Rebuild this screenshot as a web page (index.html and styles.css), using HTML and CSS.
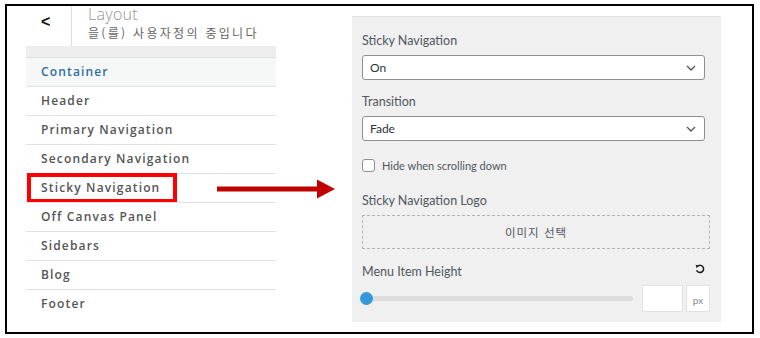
FILE: index.html
```html
<!DOCTYPE html>
<html lang="ko">
<head>
<meta charset="utf-8">
<link rel="stylesheet" href="styles.css">
</head>
<body>
<div class="frame">
  <div class="sidebar">
    <div class="sb-head">
      <div class="back">&lt;</div>
      <div class="title">
        <div class="t-main">Layout</div>
        <div class="t-sub">을(를) 사용자정의 중입니다</div>
      </div>
    </div>
    <div class="strip"></div>
    <ul class="menu">
      <li class="active">Container</li>
      <li>Header</li>
      <li>Primary Navigation</li>
      <li>Secondary Navigation</li>
      <li class="hl">Sticky Navigation<span class="mark"></span></li>
      <li>Off Canvas Panel</li>
      <li>Sidebars</li>
      <li>Blog</li>
      <li>Footer</li>
    </ul>
  </div>
  <div class="panel">
    <div class="lbl l1">Sticky Navigation</div>
    <div class="sel">On<svg class="chev" width="10" height="6" viewBox="0 0 10 6"><path d="M1 1l4 4 4-4" fill="none" stroke="#555" stroke-width="1.3"/></svg></div>
    <div class="lbl l2">Transition</div>
    <div class="sel">Fade<svg class="chev" width="10" height="6" viewBox="0 0 10 6"><path d="M1 1l4 4 4-4" fill="none" stroke="#555" stroke-width="1.3"/></svg></div>
    <div class="chk"><span class="box"></span>Hide when scrolling down</div>
    <div class="lbl l3">Sticky Navigation Logo</div>
    <div class="drop">이미지 선택</div>
    <div class="lbl-row"><span class="lbl">Menu Item Height</span>
      <svg class="reset" width="10" height="10" viewBox="0 0 10 10"><path d="M2.2 2.6A3.6 3.6 0 1 1 1.6 6.2" fill="none" stroke="#222" stroke-width="1.6"/><path d="M0.6 0.8L4.2 1.4 1.6 4.2z" fill="#222"/></svg>
    </div>
    <div class="slider-row">
      <div class="track"><span class="thumb"></span></div>
      <div class="num"></div>
      <div class="unit">px</div>
    </div>
  </div>
  <svg class="arrow" width="120" height="22" viewBox="0 0 120 22"><rect x="0" y="8.5" width="102" height="5" fill="#c00000"/><path d="M100 1.5L118 11 100 20.5z" fill="#c00000"/></svg>
</div>
</body>
</html>
```
FILE: styles.css
```css
html, body { margin: 0; padding: 0; background: #fff; }
body { font-family: "Open Sans", "Noto Sans CJK KR", sans-serif; }
.frame {
  position: relative;
  box-sizing: border-box;
  margin: 4px 0 0 5px;
  width: 749px;
  height: 330px;
  border: 2px solid #000;
  display: flex;
  align-items: flex-start;
}
.sidebar { width: 250px; margin-left: 19px; }
.sb-head { display: flex; height: 40px; }
.back {
  width: 46px; box-sizing: border-box;
  border-right: 1px solid #ddd;
  font: bold 16px "Liberation Sans", sans-serif;
  color: #111;
  padding: 7px 0 0 15px;
}
.title { padding-left: 16px; }
.t-main { font: 300 16px/15px "Open Sans", sans-serif; color: #939393; margin-top: 1px; letter-spacing: 0.3px; }
.t-sub { font: 12px/13px "Noto Sans CJK KR", sans-serif; color: #666; letter-spacing: 2.3px; margin-top: 4px; }
.strip { height: 11px; background: #eeeeee; }
.menu { list-style: none; margin: 0; padding: 0; }
.menu li {
  position: relative;
  height: 28px;
  border-top: 1px solid #e2e2e2;
  padding-left: 15px;
  font: 600 12px/28px "Open Sans", sans-serif;
  letter-spacing: 1.15px;
  color: #555;
}
.menu li.active { background: #f6f7f7; color: #2e6da4; }
.mark {
  position: absolute; left: 1px; top: -1px;
  width: 150px; height: 30px; box-sizing: border-box;
  border: 4px solid #ff0000;
}
.panel {
  margin-left: 76px; margin-top: 10px;
  width: 369px; height: 306px; box-sizing: border-box;
  background: #f0f0f0; border-top: 1px solid #e2e2e2;
  padding: 0 11px 0 10px;
  font-family: "Lato", "Noto Sans CJK KR", sans-serif;
}
.lbl { font-size: 12.5px; line-height: 16px; color: #50575e; }
.l1 { margin-top: 16px; }
.l2 { margin-top: 14px; }
.l3 { margin-top: 21px; }
.sel {
  margin-top: 6px;
  width: 343px; height: 25px; box-sizing: border-box;
  background: #fff; border: 1px solid #8c8f94; border-radius: 3px;
  display: flex; align-items: center; justify-content: space-between;
  padding: 0 8px 0 7px;
  font-size: 12px; color: #2c3338;
}
.chk {
  margin-top: 18px; display: flex; align-items: center;
  font-size: 11px; color: #50575e;
}
.box {
  width: 13px; height: 13px; box-sizing: border-box;
  border: 1px solid #8c8f94; border-radius: 3px; background: #fff;
  margin-right: 7px;
}
.drop {
  margin-top: 6px; height: 34px; box-sizing: border-box;
  border: 1px dashed #b4b4b4;
  display: flex; align-items: center; justify-content: center;
  font: 11.5px "Noto Sans CJK KR", sans-serif; color: #50575e; letter-spacing: 1px;
}
.lbl-row { margin-top: 15px; display: flex; justify-content: space-between; align-items: center; padding-right: 5px; }
.reset { margin-top: -6px; }
.slider-row { margin-top: 5px; display: flex; align-items: center; height: 27px; }
.track { position: relative; width: 271px; height: 5px; background: #dcdcdc; border-radius: 2px; }
.thumb {
  position: absolute; left: -2px; top: -4px;
  width: 13px; height: 13px; border-radius: 50%; background: #3498db;
}
.num { margin-left: 9px; width: 41px; height: 27px; box-sizing: border-box; background: #fff; border: 1px solid #e2e2e2; }
.unit {
  margin-left: 3px; width: 24px; height: 27px; box-sizing: border-box;
  background: #fff; border: 1px solid #e2e2e2;
  font-size: 10px; color: #888; display: flex; align-items: center; justify-content: center; padding-top: 3px;
}
.arrow { position: absolute; left: 210px; top: 172px; }
```
